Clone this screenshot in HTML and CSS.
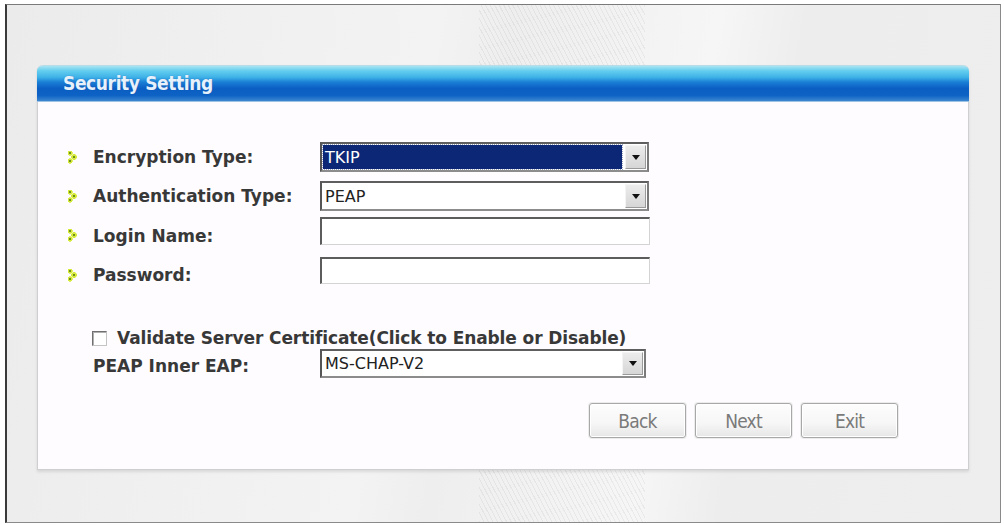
FILE: index.html
```html
<!DOCTYPE html>
<html lang="en">
<head>
  <meta charset="UTF-8">
  <title>Security Setting</title>
  <link rel="stylesheet" href="styles.css">
</head>
<body>
  <div class="frame">
    <div class="panel">
      <div class="panel-head">Security Setting</div>
      <div class="panel-body">

        <!-- Encryption / authentication -->
        <div class="row row-1">
          <label class="field"><span class="bullet"></span>Encryption Type:</label>
          <div class="select focused"><span class="value">TKIP</span><span class="arrow"></span></div>
        </div>
        <div class="row row-2">
          <label class="field"><span class="bullet"></span>Authentication Type:</label>
          <div class="select"><span class="value">PEAP</span><span class="arrow"></span></div>
        </div>

        <!-- Credentials -->
        <div class="row row-3">
          <label class="field low"><span class="bullet"></span>Login Name:</label>
          <input class="text" type="text">
        </div>
        <div class="row row-4">
          <label class="field low"><span class="bullet"></span>Password:</label>
          <input class="text short" type="password">
        </div>

        <div class="row check-row">
          <span class="checkbox"></span>
          <span class="check-label">Validate Server Certificate(Click to Enable or Disable)</span>
        </div>
        <div class="row row-eap">
          <label class="field plain">PEAP Inner EAP:</label>
          <div class="select eap"><span class="value">MS-CHAP-V2</span><span class="arrow"></span></div>
        </div>

        <div class="buttons">
          <button>Back</button>
          <button>Next</button>
          <button>Exit</button>
        </div>
      </div>
    </div>
  </div>
</body>
</html>
```

FILE: styles.css
```css
/* Reset */
* {
  margin: 0;
  padding: 0;
  box-sizing: border-box;
}
body {
  background: #fff;
  font-family: "DejaVu Sans", Verdana, sans-serif;
  color: #333;
}

/* Outer window with the faint wallpaper */
.frame {
  margin: 4px 3px 0 5px;
  height: 519px;
  border-top: 1px solid #7a7a7a;
  border-left: 2px solid #3a3a3a;
  border-right: 1px solid #8a8a8a;
  border-bottom: 1px solid #8a8a8a;
  padding: 60px 0 0 30px;
  background:
    repeating-linear-gradient(62deg, rgba(0, 0, 0, 0.05) 0 1px, transparent 1px 4px) 472px 0 / 166px 100% no-repeat,
    linear-gradient(100deg, #ebebeb 0%, #f1f0f1 22%, #f4f3f4 40%, #efeeef 47%, #f7f6f7 66%, #ededed 74%, #eeeeee 100%);
}

/* Panel */
.panel {
  width: 932px;
  height: 405px;
  background: #fefcfe;
  border: 1px solid #cfcfd2;
  border-top: none;
  border-radius: 6px 6px 0 0;
  box-shadow: 0 2px 3px rgba(0, 0, 0, 0.10);
}
.panel-head {
  height: 37px;
  margin: 0 -1px;
  padding: 0 0 0 26px;
  border-radius: 6px 6px 0 0;
  border-top: 1px solid #b9dde8;
  border-bottom: 1px solid #9cc2e4;
  background: linear-gradient(to bottom, #a8e4f3 0%, #62cdee 14%, #3fb2e8 32%, #1a7fd6 46%, #0b5ec3 64%, #0d62c4 84%, #3d86d0 100%);
  color: #e6f1fc;
  font-family: "DejaVu Sans Condensed", "DejaVu Sans", sans-serif;
  font-weight: bold;
  font-size: 19px;
  letter-spacing: -0.4px;
  line-height: 35px;
  text-shadow: 0 0 1px rgba(10, 60, 140, 0.5);
}
.panel-body {
  padding: 40px 0 0 30px;
}

/* Form rows */
.row {
  display: flex;
  align-items: center;
}
.row-1 { height: 30px; }
.row-2 { height: 30px; margin-top: 9px; }
.row-3 { height: 28px; margin-top: 6px; }
.row-4 { height: 27px; margin-top: 12px; }
.check-row { height: 18px; margin-top: 45px; padding-left: 24px; }
.row-eap { height: 29px; margin-top: 2px; }

.field {
  width: 252px;
  display: flex;
  align-items: center;
  font-weight: bold;
  font-size: 17px;
  color: #383838;
  letter-spacing: 0;
}
.field.low { margin-top: 9px; }
.field.plain { padding-left: 25px; margin-top: 5px; }

/* Lime arrow bullet */
.bullet {
  width: 10px;
  height: 13px;
  margin-right: 15px;
  background:
    radial-gradient(circle at 2px 2px, #6f8f1c 0 1.2px, #d6ea3c 1.3px 2.5px, transparent 2.7px),
    radial-gradient(circle at 6px 6px, #6f8f1c 0 1.3px, #d6ea3c 1.4px 2.8px, transparent 3px),
    radial-gradient(circle at 2px 10px, #6f8f1c 0 1.2px, #d6ea3c 1.3px 2.5px, transparent 2.7px);
}

/* Drop-down boxes */
.select {
  width: 329px;
  height: 100%;
  display: flex;
  padding: 1px;
  background: #fff;
  border: 2px solid;
  border-color: #5e5e5e #7a7a7a #8c8c8c #555;
  font-size: 16px;
  color: #222;
}
.select.eap { width: 326px; }
.select .value {
  flex: 1;
  padding-left: 2px;
  display: flex;
  align-items: center;
}
.select.focused .value {
  background: #0c2776;
  color: #fff;
  outline: 1px dotted #9aa3c0;
  margin-right: 3px;
}
.select .arrow {
  width: 21px;
  display: flex;
  align-items: center;
  justify-content: center;
  background: linear-gradient(#ececec, #d6d6d6);
  border: 1px solid;
  border-color: #f4f4f4 #9a9a9a #9a9a9a #f4f4f4;
}
.select .arrow::after {
  content: "";
  border-left: 4px solid transparent;
  border-right: 4px solid transparent;
  border-top: 5px solid #111;
}

/* Text inputs */
.text {
  width: 330px;
  height: 100%;
  background: #fff;
  border-style: solid;
  border-width: 2px 1px 1px 2px;
  border-color: #5c5c5c #d4d4d4 #d4d4d4 #5c5c5c;
  outline: none;
}

/* Checkbox */
.checkbox {
  width: 15px;
  height: 15px;
  margin-right: 10px;
  background: #fff;
  border: 1px solid;
  border-color: #707070 #c4c4c4 #c4c4c4 #707070;
  box-shadow: inset 1px 1px 0 #b0b0b0;
}
.check-label {
  font-weight: bold;
  font-size: 17px;
  color: #383838;
  letter-spacing: -0.1px;
}

/* Buttons */
.buttons {
  display: flex;
  justify-content: flex-end;
  gap: 9px;
  margin: 25px 70px 0 0;
}
.buttons button {
  width: 97px;
  height: 35px;
  border: 1px solid #a8a8a8;
  border-radius: 3px;
  background: linear-gradient(#fdfdfd 0%, #f6f6f6 60%, #e6e6e6 100%);
  box-shadow: 0 0 0 1px #ececec, inset 0 0 0 1px #fff;
  font-family: "DejaVu Sans Condensed", "DejaVu Sans", sans-serif;
  font-size: 19px;
  color: #7a7a7a;
  letter-spacing: -0.8px;
}
```
